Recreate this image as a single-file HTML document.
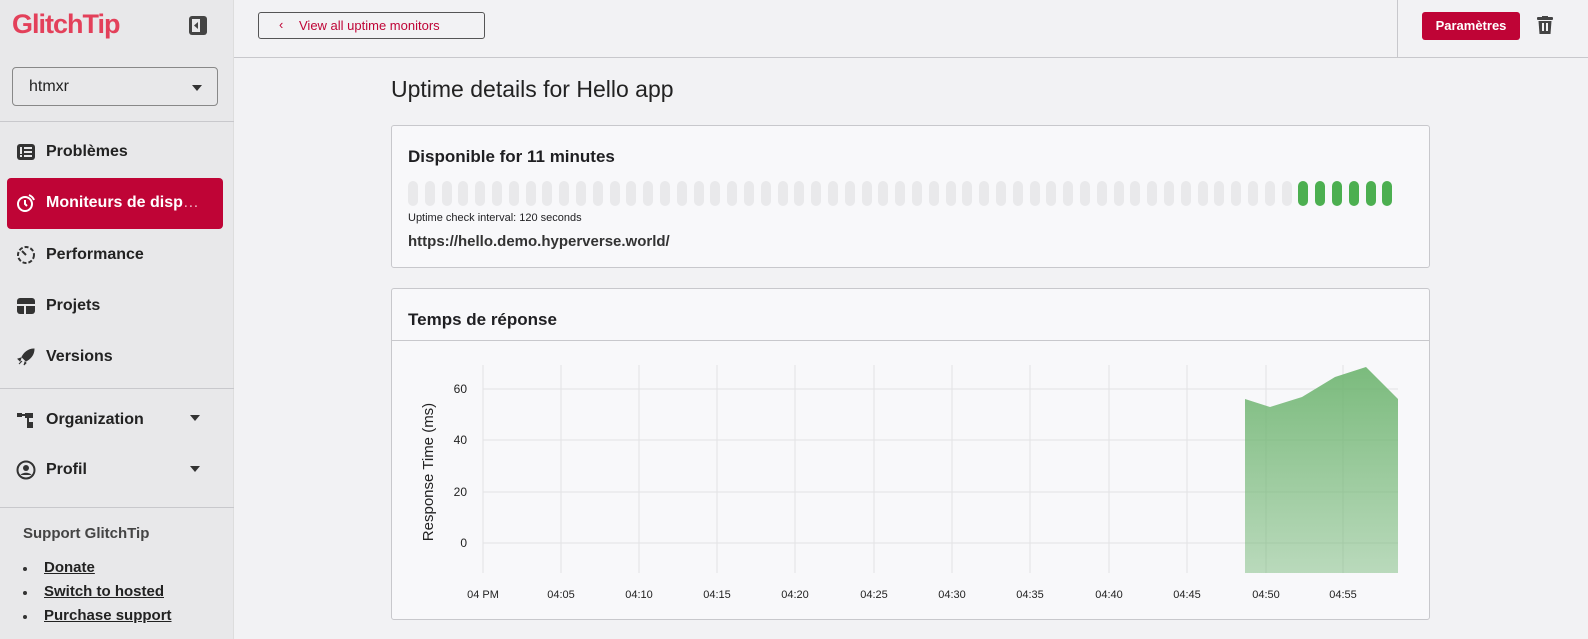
<!DOCTYPE html>
<html><head><meta charset="utf-8"><style>
*{box-sizing:border-box;margin:0;padding:0}
body{width:1588px;height:639px;overflow:hidden;background:#f2f2f4;font-family:"Liberation Sans",sans-serif;color:#1f1f22;position:relative}
.side{position:absolute;left:0;top:0;width:234px;height:639px;background:#e8e8ea;border-right:1px solid #ddd}
.logo{position:absolute;left:12px;top:9px;font-size:27px;font-weight:bold;color:#e3405a;letter-spacing:-1px}
.sel{position:absolute;left:12px;top:67px;width:206px;height:39px;border:1px solid #888;border-radius:4px;font-size:16px;padding:10px 16px;color:#222}
.sel:after{content:"";position:absolute;right:15px;top:17px;border:5px solid transparent;border-top:6px solid #333}
.hr{position:absolute;left:0;width:234px;border-top:1px solid #c8c8cc}
.nav{position:absolute;left:16px;font-size:16px;font-weight:bold;color:#222;display:flex;align-items:center;gap:10px}
.nav svg{width:20px;height:20px}
.act{position:absolute;left:7px;top:178px;width:216px;height:51px;background:#bf0436;border-radius:4px}
.caret{position:absolute;left:190px;border:5px solid transparent;border-top:6px solid #333}
.top{position:absolute;left:234px;top:0;right:0;height:58px;border-bottom:1px solid #c8c8cc}
.back{position:absolute;left:258px;top:12px;width:227px;height:27px;border:1px solid #555;border-radius:3px;font-size:13px;color:#bf0436;padding:5px 0 0 40px}
.param{position:absolute;left:1422px;top:12px;width:98px;height:28px;background:#bf0436;color:#fff;border-radius:3px;font-size:13px;font-weight:bold;text-align:center;line-height:28px}
.card{position:absolute;left:391px;width:1039px;background:#f8f8fa;border:1px solid #c8c8cc;border-radius:3px}
.bar{position:absolute;top:181px;width:10px;height:25px;border-radius:5px;background:#e9e9eb}
.links{position:absolute;left:23px;top:556px;font-size:15px;font-weight:bold;line-height:24px}
.links div{position:relative;padding-left:21px}
.links div:before{content:"";position:absolute;left:0;top:11px;width:4px;height:4px;border-radius:2px;background:#333}
.links span{text-decoration:underline;color:#222}
</style></head><body>
<div class="side">
<div class="logo">GlitchTip</div>
<svg style="position:absolute;left:189px;top:16px" width="18" height="19" viewBox="0 0 18 19"><rect x="0" y="0" width="18" height="19" rx="3" fill="#444"/><rect x="3" y="3" width="8" height="13" fill="#e8e8ea"/><path d="M9 6 L5 9.5 L9 13Z" fill="#444"/></svg>
<div class="sel">htmxr</div>
<div class="hr" style="top:121px"></div>
<div class="nav" style="top:142px"><svg viewBox="0 0 20 20"><rect x="1" y="2" width="18" height="16" rx="3" fill="#333"/><rect x="4" y="5" width="2" height="7" fill="#e8e8ea"/><rect x="4" y="13" width="2" height="2" fill="#e8e8ea"/><rect x="8" y="5" width="8" height="2" fill="#e8e8ea"/><rect x="8" y="9" width="8" height="2" fill="#e8e8ea"/><rect x="8" y="13" width="8" height="2" fill="#e8e8ea"/></svg>Problèmes</div>
<div class="act"></div>
<div class="nav" style="top:193px;color:#fff"><svg viewBox="0 0 20 20" fill="none" stroke="#fff" stroke-width="2"><circle cx="9" cy="11" r="7"/><path d="M9 7v4l2 2M13 2a9 9 0 0 1 5 5"/></svg><span>Moniteurs de disp<span style="font-weight:normal;opacity:.7">…</span></span></div>
<div class="nav" style="top:245px"><svg viewBox="0 0 20 20" fill="none" stroke="#333" stroke-width="2" stroke-dasharray="4 2"><circle cx="10" cy="10" r="8"/><path d="M6 6l4 4" stroke-dasharray="none"/></svg>Performance</div>
<div class="nav" style="top:296px"><svg viewBox="0 0 20 20"><rect x="1" y="2" width="18" height="16" rx="3" fill="#333"/><rect x="1" y="8" width="18" height="2" fill="#e8e8ea"/><rect x="8" y="8" width="2" height="10" fill="#e8e8ea"/></svg>Projets</div>
<div class="nav" style="top:347px"><svg viewBox="0 0 20 20"><path d="M18 2C12 2 8 6 6 10l4 4c4-2 8-6 8-12zM5 11l-3 1 2 2zM9 15l-1 3 2-2zM3 17l3-3" fill="#333" stroke="#333"/></svg>Versions</div>
<div class="hr" style="top:388px"></div>
<div class="nav" style="top:410px"><svg viewBox="0 0 20 20"><rect x="1" y="3" width="5" height="4" fill="#333"/><rect x="9" y="3" width="8" height="5" fill="#333"/><rect x="11" y="12" width="6" height="6" fill="#333"/><path d="M6 5h3M12 8v6" stroke="#333" stroke-width="2"/></svg>Organization</div>
<div class="caret" style="top:415px"></div>
<div class="nav" style="top:460px"><svg viewBox="0 0 20 20"><circle cx="10" cy="10" r="8.5" fill="none" stroke="#333" stroke-width="2"/><circle cx="10" cy="8" r="3" fill="#333"/><path d="M4.5 15c2-3 9-3 11 0" fill="#333"/></svg>Profil</div>
<div class="caret" style="top:466px"></div>
<div class="hr" style="top:507px"></div>
<div style="position:absolute;left:23px;top:525px;font-size:15px;font-weight:bold;color:#444">Support GlitchTip</div>
<div class="links"><div><span>Donate</span></div><div><span>Switch to hosted</span></div><div><span>Purchase support</span></div></div>
</div>
<div class="top"><div style="position:absolute;left:1163px;top:0;height:58px;border-left:1px solid #c8c8cc"></div></div>
<div class="back"><span style="position:absolute;left:20px;top:4px">‹</span>View all uptime monitors</div>
<div class="param">Paramètres</div>
<svg style="position:absolute;left:1537px;top:16px" width="16" height="19" viewBox="0 0 16 19"><rect x="0" y="1" width="16" height="3" rx="1" fill="#444"/><rect x="5" y="0" width="6" height="2" fill="#444"/><path d="M1.5 5h13l-1 13h-11z" fill="#444"/><rect x="5" y="7" width="2" height="8" fill="#f2f2f4"/><rect x="9" y="7" width="2" height="8" fill="#f2f2f4"/></svg>
<div style="position:absolute;left:391px;top:76px;font-size:23px;color:#222">Uptime details for Hello app</div>
<div class="card" style="top:125px;height:143px">
<div style="position:absolute;left:16px;top:21px;font-size:17px;font-weight:bold">Disponible for 11 minutes</div>
<div style="position:absolute;left:16px;top:86px;font-size:11px">Uptime check interval: 120 seconds</div>
<div style="position:absolute;left:16px;top:107px;font-size:15px;font-weight:bold;color:#333">https://hello.demo.hyperverse.world/</div>
</div>
<div id="bars"></div>
<div class="card" style="top:288px;height:332px">
<div style="position:absolute;left:16px;top:21px;font-size:17px;font-weight:bold">Temps de réponse</div>
<div style="position:absolute;left:0;right:0;top:51px;border-top:1px solid #c8c8cc"></div>
</div>
<svg style="position:absolute;left:391px;top:340px" width="1039" height="280">
<defs><linearGradient id="g" x1="0" y1="0" x2="0" y2="1"><stop offset="0" stop-color="#6db46f" stop-opacity=".9"/><stop offset="1" stop-color="#6db46f" stop-opacity=".45"/></linearGradient></defs>
<g stroke="#e2e2e4" stroke-width="1">
<line x1="92" y1="49" x2="1007" y2="49"/><line x1="92" y1="100" x2="1007" y2="100"/><line x1="92" y1="152" x2="1007" y2="152"/><line x1="92" y1="203" x2="1007" y2="203"/>
<line x1="92" y1="25" x2="92" y2="233"/><line x1="170" y1="25" x2="170" y2="233"/><line x1="248" y1="25" x2="248" y2="233"/><line x1="326" y1="25" x2="326" y2="233"/><line x1="404" y1="25" x2="404" y2="233"/><line x1="483" y1="25" x2="483" y2="233"/><line x1="561" y1="25" x2="561" y2="233"/><line x1="639" y1="25" x2="639" y2="233"/><line x1="718" y1="25" x2="718" y2="233"/><line x1="796" y1="25" x2="796" y2="233"/><line x1="875" y1="25" x2="875" y2="233"/><line x1="952" y1="25" x2="952" y2="233"/>
</g>
<path d="M854 59 L879 67 L911 57 L944 37 L975 27 L1007 59 L1007 233 L854 233Z" fill="url(#g)"/>
<g font-size="12" fill="#222" font-family="Liberation Sans" text-anchor="end"><text x="76" y="53">60</text><text x="76" y="104">40</text><text x="76" y="156">20</text><text x="76" y="207">0</text></g>
<text transform="translate(42,132) rotate(-90)" text-anchor="middle" font-size="15" fill="#222" font-family="Liberation Sans">Response Time (ms)</text>
<g font-size="11" fill="#222" font-family="Liberation Sans" text-anchor="middle"><text x="92" y="258">04 PM</text><text x="170" y="258">04:05</text><text x="248" y="258">04:10</text><text x="326" y="258">04:15</text><text x="404" y="258">04:20</text><text x="483" y="258">04:25</text><text x="561" y="258">04:30</text><text x="639" y="258">04:35</text><text x="718" y="258">04:40</text><text x="796" y="258">04:45</text><text x="875" y="258">04:50</text><text x="952" y="258">04:55</text></g>
</svg>
<script>
var h='';for(var i=0;i<59;i++){h+='<div class="bar" style="left:'+(408+i*16.8).toFixed(1)+'px;'+(i>=53?'background:#4caf50':'')+'"></div>';}
document.getElementById('bars').innerHTML=h;
</script>
</body></html>
